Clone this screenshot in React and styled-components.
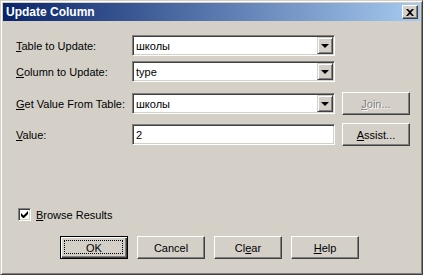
import React from "react";
import styled, { createGlobalStyle } from "styled-components";

const Global = createGlobalStyle`
  html, body { margin: 0; padding: 0; background: #d4d0c8; }
  * { box-sizing: border-box; }
`;

const Window = styled.div`
  width: 423px;
  height: 275px;
  background: #d4d0c8;
  border: 1px solid;
  border-color: #d4d0c8 #404040 #404040 #d4d0c8;
  box-shadow: inset 1px 1px #fff, inset -1px -1px #808080;
  padding: 2px;
  display: flex;
  flex-direction: column;
  font-family: "Liberation Sans", Arial, sans-serif;
  font-size: 11px;
  color: #000;
`;

const TitleBar = styled.div`
  height: 18px;
  display: flex;
  align-items: center;
  justify-content: space-between;
  padding: 0 2px 0 3px;
  background: linear-gradient(to right, #0a246a, #a6caf0);
  color: #fff;
  font-weight: bold;
  font-size: 12px;
`;

const CloseButton = styled.div`
  width: 16px;
  height: 14px;
  background: #d4d0c8;
  border: 1px solid;
  border-color: #fff #404040 #404040 #fff;
  box-shadow: inset -1px -1px #808080;
  display: flex;
  align-items: center;
  justify-content: center;
`;

const Body = styled.div`
  flex: 1;
  display: flex;
  flex-direction: column;
  padding: 13px 7px 0 13px;
`;

const Row = styled.div`
  display: grid;
  grid-template-columns: 109px 203px 68px;
  column-gap: 7px;
  align-items: center;
  height: 23px;
  margin-top: ${(p) => p.$gap || 0}px;
`;

const Label = styled.span`
  white-space: nowrap;
`;

const U = styled.span`
  text-decoration: underline;
`;

const Sunken = styled.div`
  height: 21px;
  background: #fff;
  border: 1px solid;
  border-color: #808080 #fff #fff #808080;
  box-shadow: inset 1px 1px #404040, inset -1px -1px #d4d0c8;
  padding: 1px;
  display: flex;
  align-items: center;
`;

const FieldText = styled.span`
  flex: 1;
  padding-left: 2px;
`;

const DropButton = styled.div`
  width: 16px;
  height: 17px;
  background: #d4d0c8;
  border: 1px solid;
  border-color: #d4d0c8 #404040 #404040 #d4d0c8;
  box-shadow: inset 1px 1px #fff, inset -1px -1px #808080;
  display: flex;
  align-items: center;
  justify-content: center;
`;

const Arrow = styled.div`
  width: 0;
  height: 0;
  border-left: 4px solid transparent;
  border-right: 4px solid transparent;
  border-top: 4px solid #000;
  margin-top: 1px;
`;

const Button = styled.div`
  width: 68px;
  height: 23px;
  background: #d4d0c8;
  border: 1px solid;
  border-color: ${(p) => (p.$default ? "#000" : "#fff #404040 #404040 #fff")};
  box-shadow: ${(p) =>
    p.$default
      ? "inset 1px 1px #fff, inset -1px -1px #404040, inset -2px -2px #808080"
      : "inset -1px -1px #808080"};
  display: flex;
  align-items: center;
  justify-content: center;
  position: relative;
  color: ${(p) => (p.$disabled ? "#808080" : "#000")};
  text-shadow: ${(p) => (p.$disabled ? "1px 1px #fff" : "none")};
`;

const Focus = styled.div`
  position: absolute;
  inset: 3px 4px 4px 3px;
  border: 1px dotted #000;
`;

const CheckRow = styled.div`
  margin-top: auto;
  display: flex;
  align-items: center;
  gap: 5px;
  padding-left: 2px;
`;

const CheckBox = styled.div`
  width: 13px;
  height: 13px;
  background: #fff;
  border: 1px solid;
  border-color: #808080 #fff #fff #808080;
  box-shadow: inset 1px 1px #404040, inset -1px -1px #d4d0c8;
  display: flex;
  align-items: center;
  justify-content: center;
`;

const ButtonRow = styled.div`
  display: flex;
  gap: 9px;
  padding-left: 44px;
  margin-top: 15px;
  margin-bottom: 13px;
`;

export default function App() {
  return (
    <>
      <Global />
      <Window>
        <TitleBar>
          <span>Update Column</span>
          <CloseButton>
            <svg width="8" height="7" viewBox="0 0 8 7">
              <path d="M0 0h2l2 2 2-2h2L5 3.5 8 7H6L4 5 2 7H0l3-3.5z" fill="#000" />
            </svg>
          </CloseButton>
        </TitleBar>
        <Body>
          <Row>
            <Label><U>T</U>able to Update:</Label>
            <Sunken>
              <FieldText>школы</FieldText>
              <DropButton><Arrow /></DropButton>
            </Sunken>
          </Row>
          <Row $gap={3}>
            <Label><U>C</U>olumn to Update:</Label>
            <Sunken>
              <FieldText>type</FieldText>
              <DropButton><Arrow /></DropButton>
            </Sunken>
          </Row>
          <Row $gap={9}>
            <Label><U>G</U>et Value From Table:</Label>
            <Sunken>
              <FieldText>школы</FieldText>
              <DropButton><Arrow /></DropButton>
            </Sunken>
            <Button $disabled><span><U>J</U>oin...</span></Button>
          </Row>
          <Row $gap={8}>
            <Label><U>V</U>alue:</Label>
            <Sunken>
              <FieldText>2</FieldText>
            </Sunken>
            <Button><span><U>A</U>ssist...</span></Button>
          </Row>
          <CheckRow>
            <CheckBox>
              <svg width="7" height="7" viewBox="0 0 7 7">
                <path d="M0 2v3l2 2h1l4-4V0L2.5 4.5z" fill="#000" />
              </svg>
            </CheckBox>
            <span><U>B</U>rowse Results</span>
          </CheckRow>
          <ButtonRow>
            <Button $default>OK<Focus /></Button>
            <Button>Cancel</Button>
            <Button>Cl<U>e</U>ar</Button>
            <Button><U>H</U>elp</Button>
          </ButtonRow>
        </Body>
      </Window>
    </>
  );
}
